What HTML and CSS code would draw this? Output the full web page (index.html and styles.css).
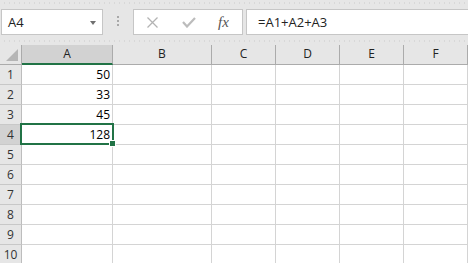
FILE: index.html
```html
<!DOCTYPE html>
<html lang="en">
<head>
    <meta charset="UTF-8">
    <meta name="viewport" content="width=device-width, initial-scale=1.0">
    <title>Sheet1 - Excel</title>
    <link rel="stylesheet" href="styles.css">
</head>
<body>
    <div class="toolbar">
        <div class="name-box">
            <span class="name-text">A4</span>
            <span class="drop-arrow"></span>
        </div>
        <div class="grip">
            <span></span><span></span><span></span>
        </div>
        <div class="fx-buttons">
            <svg class="icon-cancel" width="11" height="11" viewBox="0 0 11 11">
                <path d="M0.5 0.5 L10.5 10.5 M10.5 0.5 L0.5 10.5" stroke="#b3b3b3" stroke-width="1.3" fill="none"/>
            </svg>
            <svg class="icon-enter" width="14" height="11" viewBox="0 0 14 11">
                <path d="M1 5 L5 9.5 L13 1" stroke="#bcbcbc" stroke-width="2.2" fill="none"/>
            </svg>
            <span class="fx">fx</span>
        </div>
        <div class="formula">=A1+A2+A3</div>
    </div>

    <div class="sheet">
        <div class="corner"><span class="corner-tri"></span></div>
        <div class="col-head active">A</div>
        <div class="col-head">B</div>
        <div class="col-head">C</div>
        <div class="col-head">D</div>
        <div class="col-head">E</div>
        <div class="col-head">F</div>

        <div class="row-head">1</div>
        <div class="cell num">50</div><div class="cell"></div><div class="cell"></div><div class="cell"></div><div class="cell"></div><div class="cell"></div>

        <div class="row-head">2</div>
        <div class="cell num">33</div><div class="cell"></div><div class="cell"></div><div class="cell"></div><div class="cell"></div><div class="cell"></div>

        <div class="row-head">3</div>
        <div class="cell num">45</div><div class="cell"></div><div class="cell"></div><div class="cell"></div><div class="cell"></div><div class="cell"></div>

        <div class="row-head active">4</div>
        <div class="cell num selected">128<span class="fill-handle"></span></div><div class="cell"></div><div class="cell"></div><div class="cell"></div><div class="cell"></div><div class="cell"></div>

        <div class="row-head">5</div>
        <div class="cell"></div><div class="cell"></div><div class="cell"></div><div class="cell"></div><div class="cell"></div><div class="cell"></div>

        <div class="row-head">6</div>
        <div class="cell"></div><div class="cell"></div><div class="cell"></div><div class="cell"></div><div class="cell"></div><div class="cell"></div>

        <div class="row-head">7</div>
        <div class="cell"></div><div class="cell"></div><div class="cell"></div><div class="cell"></div><div class="cell"></div><div class="cell"></div>

        <div class="row-head">8</div>
        <div class="cell"></div><div class="cell"></div><div class="cell"></div><div class="cell"></div><div class="cell"></div><div class="cell"></div>

        <div class="row-head">9</div>
        <div class="cell"></div><div class="cell"></div><div class="cell"></div><div class="cell"></div><div class="cell"></div><div class="cell"></div>

        <div class="row-head">10</div>
        <div class="cell"></div><div class="cell"></div><div class="cell"></div><div class="cell"></div><div class="cell"></div><div class="cell"></div>
    </div>
</body>
</html>
```

FILE: styles.css
```css
* {
    box-sizing: border-box;
}

body {
    margin: 0;
    height: 263px;
    overflow: hidden;
    background-color: #ffffff;
    font-family: "Open Sans", "Liberation Sans", sans-serif;
    color: #111;
}

/* formula bar */
.toolbar {
    display: flex;
    align-items: flex-start;
    height: 45px;
    padding-top: 9px;
    background-color: #e6e6e6;
    background-image:
        radial-gradient(circle, #d8d8d8 0.6px, transparent 0.8px),
        radial-gradient(circle, #d8d8d8 0.6px, transparent 0.8px);
    background-size: 5px 2px, 5px 2px;
    background-position: 2px 2px, 2px 40px;
    background-repeat: repeat-x, repeat-x;
}

.name-box {
    display: flex;
    align-items: center;
    justify-content: space-between;
    width: 102px;
    height: 26px;
    margin-left: 1px;
    padding: 0 6px;
    background-color: #fff;
    border: 1px solid #c6c6c6;
}

.name-text {
    font-size: 13px;
    line-height: 24px;
    color: #222;
}

.drop-arrow {
    width: 0;
    height: 0;
    margin-top: 1px;
    border-left: 3.5px solid transparent;
    border-right: 3.5px solid transparent;
    border-top: 4px solid #707070;
}

.grip {
    display: flex;
    flex-direction: column;
    align-items: center;
    gap: 2px;
    width: 30px;
    padding-top: 7px;
}

.grip span {
    width: 2px;
    height: 2px;
    background-color: #a8a8a8;
}

.fx-buttons {
    display: flex;
    align-items: center;
    width: 110px;
    height: 26px;
    padding-left: 13px;
    background-color: #fff;
    border: 1px solid #c6c6c6;
}

.icon-enter {
    margin-left: 24px;
}

.fx {
    margin-left: 22px;
    font-family: "Liberation Serif", serif;
    font-style: italic;
    font-size: 15px;
    line-height: 24px;
    color: #555;
}

.formula {
    flex: 1;
    height: 26px;
    margin-left: 3px;
    margin-right: -2px;
    padding-left: 11px;
    font-size: 13px;
    line-height: 24px;
    color: #222;
    background-color: #fff;
    border: 1px solid #c6c6c6;
}

/* grid */
.sheet {
    display: grid;
    grid-template-columns: 22px 91px 99px 64px 64px 64px 64px;
    grid-auto-rows: 20px;
    font-size: 12px;
}

.corner,
.col-head,
.row-head {
    background-color: #e6e6e6;
    border-right: 1px solid #ababab;
    border-bottom: 1px solid #ababab;
    text-align: center;
}

.corner {
    position: relative;
}

.corner-tri {
    position: absolute;
    right: 3px;
    bottom: 3px;
    width: 0;
    height: 0;
    border-left: 12px solid transparent;
    border-bottom: 12px solid #b5b5b5;
}

.col-head {
    line-height: 18px;
    color: #222;
}

.col-head.active {
    background-color: #d2d2d2;
    border-bottom: 2px solid #217346;
}

.row-head {
    line-height: 19px;
    color: #333;
    border-right-color: #bdbdbd;
    border-bottom-color: #c8c8c8;
}

.row-head.active {
    background-color: #d2d2d2;
    border-right: 1px solid #217346;
}

.cell {
    border-right: 1px solid #d4d4d4;
    border-bottom: 1px solid #d4d4d4;
    line-height: 19px;
    padding-right: 2px;
}

.num {
    text-align: right;
    color: #000;
}

.selected {
    position: relative;
}

.selected::after {
    content: "";
    position: absolute;
    left: -2px;
    top: -2px;
    right: -2px;
    bottom: -1px;
    border: 2px solid #217346;
}

.fill-handle {
    position: absolute;
    right: -4px;
    bottom: -3px;
    width: 7px;
    height: 7px;
    background-color: #217346;
    border: 1px solid #fff;
    z-index: 2;
}
```
